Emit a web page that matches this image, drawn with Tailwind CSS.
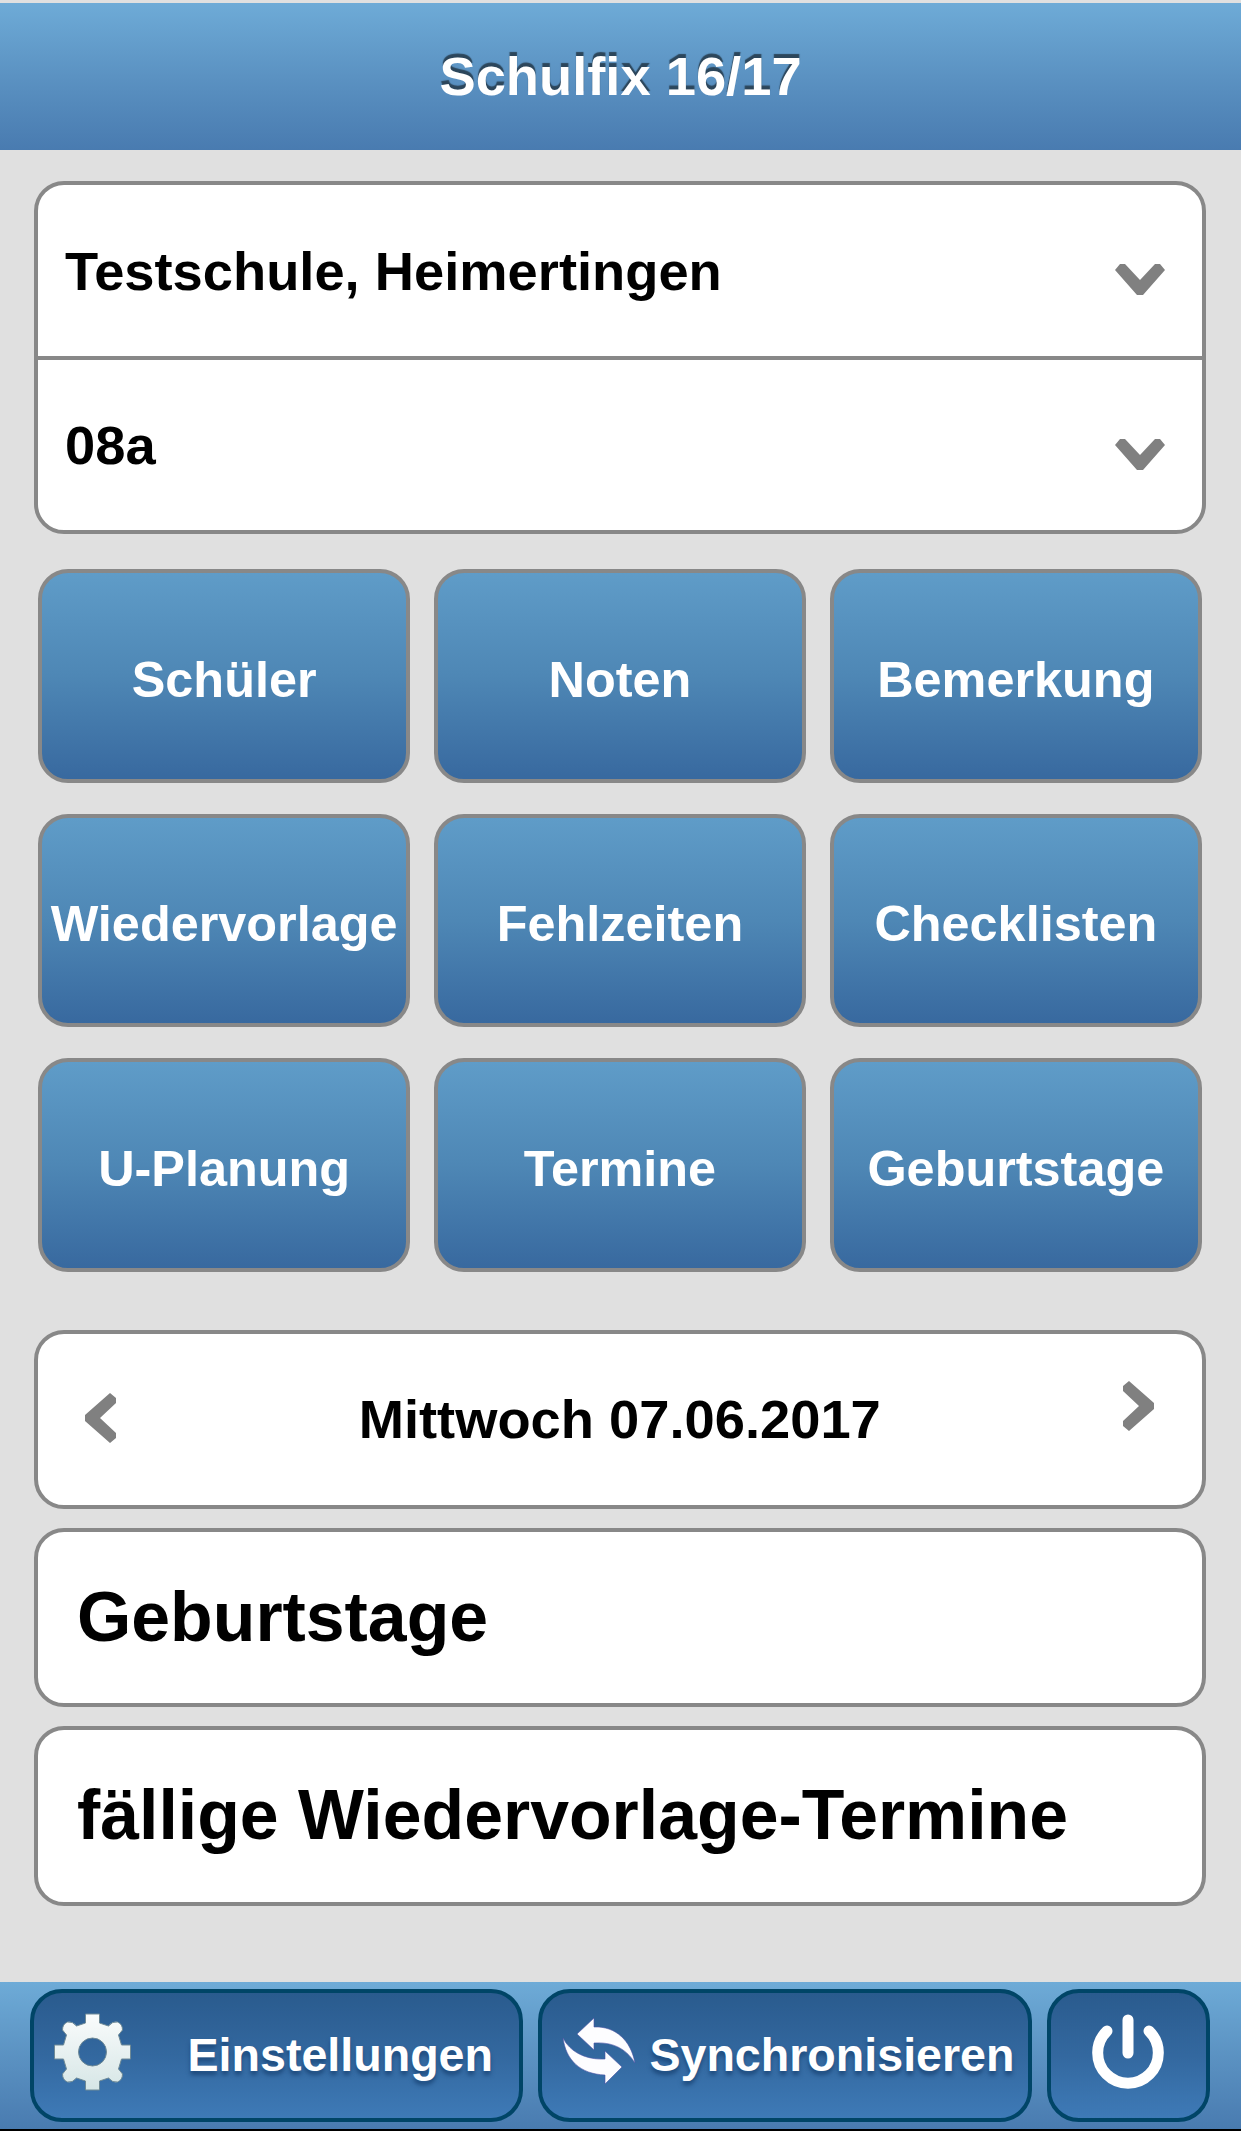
<!DOCTYPE html>
<html lang="de">
  <head>
    <meta charset="UTF-8" />
    <meta name="viewport" content="width=device-width, initial-scale=1.0" />
    <title>Schulfix 16/17</title>
    <script src="https://cdn.jsdelivr.net/npm/@tailwindcss/browser@4"></script>
  </head>
  <body class="bg-black">
    <div class="flex h-[2129px] w-full flex-col bg-[#e0e0e0] pt-[2.5px] font-['Liberation_Sans',Arial,sans-serif] font-bold">
      <header class="flex h-[147px] shrink-0 items-center justify-center bg-linear-to-b from-[#6eabd7] via-[#5b92c2] to-[#497bb0] pt-[3px]">
        <h1 class="text-[54.3px] leading-none text-white [text-shadow:0_-4px_1px_#2c465b]">Schulfix 16/17</h1>
      </header>

      <main class="flex flex-1 flex-col pt-[31.5px] pr-[35.5px] pl-[34px]">
        <!-- Schule und Klasse -->
        <section class="flex h-[353px] flex-col rounded-[30px] border-4 border-[#888] bg-white text-[54.3px] leading-none">
          <button class="flex h-[174.5px] items-center justify-between border-b-4 border-[#888] pr-[37px] pl-[27px] text-left">
            <span class="pt-[3px]">Testschule, Heimertingen</span>
            <svg class="mt-5 h-8 w-[50px]" viewBox="0 0 50 32" fill="#808080">
              <path d="M0 6L5 0H10L25 16L40 0H45L50 6L28 31H22Z" />
            </svg>
          </button>
          <button class="flex flex-1 items-center justify-between pr-[37px] pl-[27px] text-left">
            <span class="pt-[3px]">08a</span>
            <svg class="mt-5 h-8 w-[50px]" viewBox="0 0 50 32" fill="#808080">
              <path d="M0 6L5 0H10L25 16L40 0H45L50 6L28 31H22Z" />
            </svg>
          </button>
        </section>

        <nav class="mr-[3.5px] ml-1 mt-[35px] grid grid-cols-3 gap-x-[23.5px] gap-y-[31px] text-[50.4px] leading-none text-white">
          <button class="h-[213.6px] rounded-[30px] border-4 border-[#888] bg-linear-to-b from-[#5f9cc8] via-[#4e87b5] to-[#38699f] pt-2">Schüler</button>
          <button class="h-[213.6px] rounded-[30px] border-4 border-[#888] bg-linear-to-b from-[#5f9cc8] via-[#4e87b5] to-[#38699f] pt-2">Noten</button>
          <button class="h-[213.6px] rounded-[30px] border-4 border-[#888] bg-linear-to-b from-[#5f9cc8] via-[#4e87b5] to-[#38699f] pt-2">Bemerkung</button>
          <button class="h-[213.6px] rounded-[30px] border-4 border-[#888] bg-linear-to-b from-[#5f9cc8] via-[#4e87b5] to-[#38699f] pt-2">Wiedervorlage</button>
          <button class="h-[213.6px] rounded-[30px] border-4 border-[#888] bg-linear-to-b from-[#5f9cc8] via-[#4e87b5] to-[#38699f] pt-2">Fehlzeiten</button>
          <button class="h-[213.6px] rounded-[30px] border-4 border-[#888] bg-linear-to-b from-[#5f9cc8] via-[#4e87b5] to-[#38699f] pt-2">Checklisten</button>
          <button class="h-[213.6px] rounded-[30px] border-4 border-[#888] bg-linear-to-b from-[#5f9cc8] via-[#4e87b5] to-[#38699f] pt-2">U-Planung</button>
          <button class="h-[213.6px] rounded-[30px] border-4 border-[#888] bg-linear-to-b from-[#5f9cc8] via-[#4e87b5] to-[#38699f] pt-2">Termine</button>
          <button class="h-[213.6px] rounded-[30px] border-4 border-[#888] bg-linear-to-b from-[#5f9cc8] via-[#4e87b5] to-[#38699f] pt-2">Geburtstage</button>
        </nav>

        <!-- Tagesübersicht -->
        <section class="mt-[58px] flex flex-col gap-[18.7px] leading-none">
          <div class="flex h-[179.5px] items-center justify-between rounded-[30px] border-4 border-[#888] bg-white pr-[46px] pl-[46px] text-[54.3px]">
            <svg class="mb-1 h-[50px] w-8" viewBox="0 0 32 50" fill="#808080">
              <path d="M26 0L32 5V10L16 25L32 40V45L26 50L1 28V22Z" />
            </svg>
            <span class="pt-0.5">Mittwoch 07.06.2017</span>
            <svg class="mb-7 h-[50px] w-8" viewBox="0 0 32 50" fill="#808080">
              <path d="M6 0L0 5V10L16 25L0 40V45L6 50L31 28V22Z" />
            </svg>
          </div>
          <h2 class="flex h-[179.5px] items-center rounded-[30px] border-4 border-[#888] bg-white pl-[39px] text-[69.8px]">Geburtstage</h2>
          <h2 class="flex h-[179.5px] items-center rounded-[30px] border-4 border-[#888] bg-white pl-[39px] text-[69.8px]">fällige Wiedervorlage-Termine</h2>
        </section>
      </main>

      <footer class="flex h-[147.5px] shrink-0 gap-[15px] bg-linear-to-b from-[#6eabd7] via-[#5b92c2] to-[#497bb0] pt-[7.5px] pr-[31px] pl-[30px] text-[46.6px] leading-none text-white">
        <button class="flex h-[133px] w-[493px] items-center justify-between rounded-[32px] border-4 border-[#004567] bg-linear-to-b from-[#2a5b8e] via-[#33689f] to-[#3e7ab7] pr-[26px] pl-[19.5px] [text-shadow:0_4px_4px_#1d4a7c]">
          <svg class="mb-2 h-[78px] w-[77px]" viewBox="-38.5 -39 77 78">
            <defs>
              <linearGradient id="gear" x1="0" y1="0" x2="0" y2="1">
                <stop offset="0" stop-color="#fafcfc" />
                <stop offset="1" stop-color="#d6e6e6" />
              </linearGradient>
            </defs>
            <path fill="url(#gear)" stroke="#6f8a96" stroke-width="1" fill-rule="evenodd" d="M-7 -38H7V-29L16 -26Q20 -31 25 -30Q30 -28 30 -22L26 -17L29 -7H38V7H29L26 17L30 22Q30 28 25 30Q20 31 16 26L7 29V38H-7V29L-16 26Q-20 31 -25 30Q-30 28 -30 22L-26 17L-29 7H-38V-7H-29L-26 -17L-30 -22Q-30 -28 -25 -30Q-20 -31 -16 -26L-7 -29ZM0 -14A14 14 0 1 0 0 14A14 14 0 1 0 0 -14Z" />
          </svg>
          <span>Einstellungen</span>
        </button>
        <button class="flex h-[133px] w-[493.5px] items-center justify-between rounded-[32px] border-4 border-[#004567] bg-linear-to-b from-[#2a5b8e] via-[#33689f] to-[#3e7ab7] pr-[13px] pl-[20px] [text-shadow:0_4px_4px_#1d4a7c]">
          <svg class="mb-2 h-[70px] w-[75px]" viewBox="0 0 75 70" fill="#fdfdff" stroke="#4a52a5" stroke-width=".6">
            <path d="M15 17L32 1V10C54 9 69 24 73 46C63 30 49 25 32 26V33Z" />
            <path d="M1 21C8 35 24 43 43 42V34L60 50L43 67V58C18 57 4 43 1 21Z" />
          </svg>
          <span>Synchronisieren</span>
        </button>
        <button aria-label="Abmelden" class="flex h-[133px] w-[163.5px] items-center justify-center rounded-[32px] border-4 border-[#004567] bg-linear-to-b from-[#2a5b8e] via-[#33689f] to-[#3e7ab7]">
          <svg class="mb-[9px] h-[76px] w-[72px]" viewBox="0 0 72 76" fill="none" stroke="#fff" stroke-width="11" stroke-linecap="round">
            <path d="M36 7V40M15 18A30.3 30.3 0 1 0 57 18" />
          </svg>
        </button>
      </footer>
    </div>
  </body>
</html>
